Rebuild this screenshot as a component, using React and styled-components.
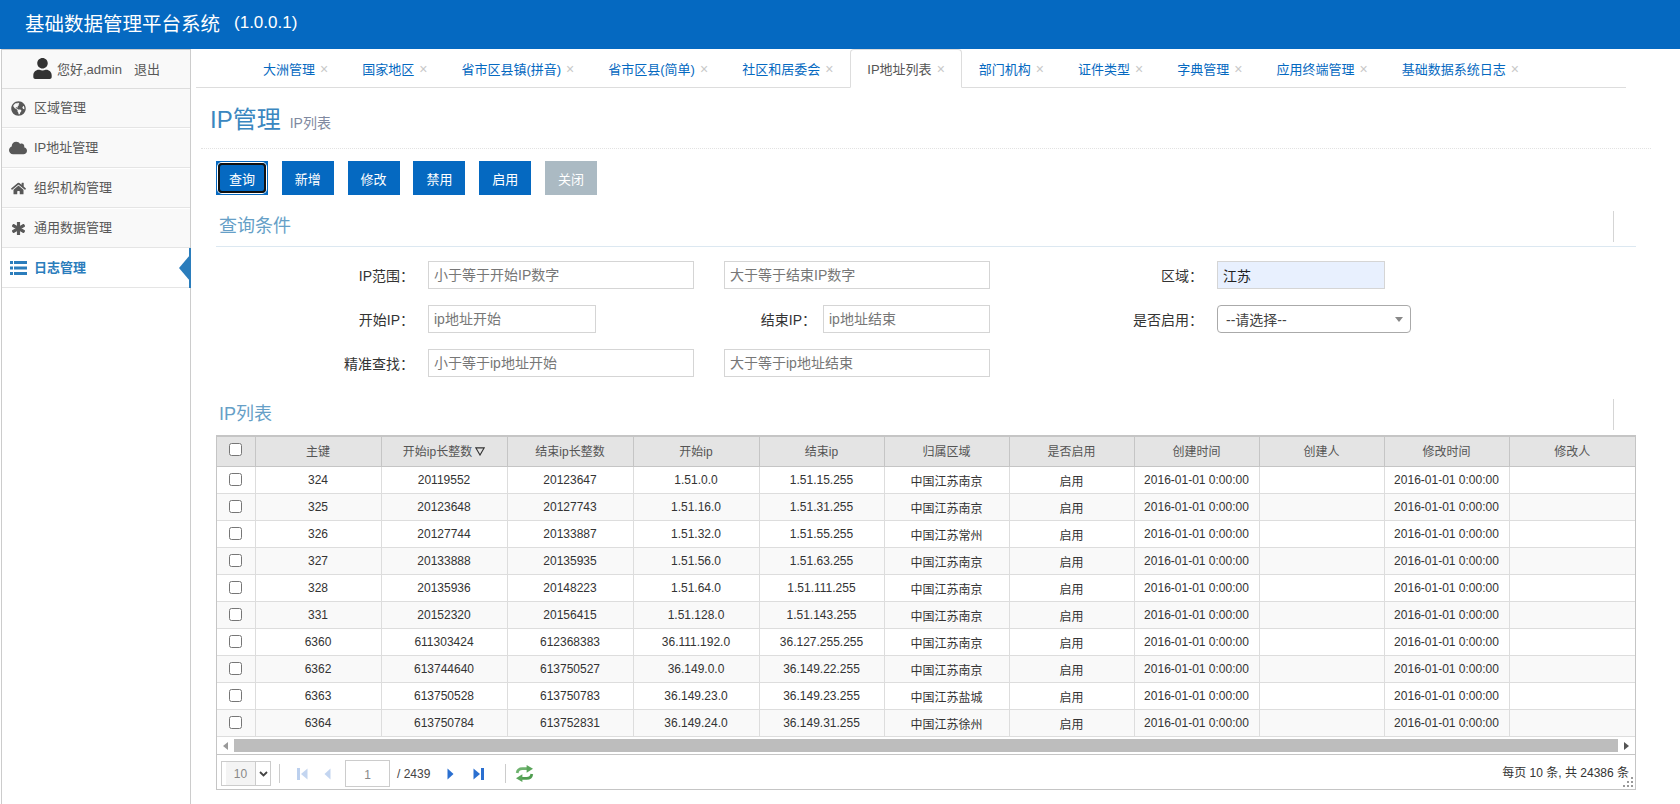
import React from "react";
import styled, { createGlobalStyle } from "styled-components";
import { FaAsterisk, FaCloud, FaGlobeAmericas, FaHome, FaUser } from "react-icons/fa";

const BLUE = "#0569c1";
const FONT = '"Liberation Sans", "Noto Sans CJK SC", sans-serif';

const GlobalStyle = createGlobalStyle`
  html, body {
    margin: 0;
    padding: 0;
    background: #fff;
    font-family: ${FONT};
    font-size: 13px;
    color: #393939;
  }
`;

const Page = styled.div`
  height: 804px;
  overflow: hidden;
  display: flex;
  flex-direction: column;
`;

const TopBar = styled.header`
  height: 49px;
  flex: none;
  background: ${BLUE};
  color: #fff;
  display: flex;
  align-items: center;
  padding: 0 0 4px 25px;
  box-sizing: border-box;
  font-size: 19.5px;
  gap: 14px;

  small {
    font-size: 17px;
  }
`;

const Body = styled.div`
  flex: 1;
  display: flex;
  min-height: 0;
`;

const Sidebar = styled.aside`
  width: 190px;
  margin-left: 1px;
  flex: none;
  box-sizing: border-box;
  border: 1px solid #ccc;
  border-width: 1px 1px 0;
`;

const UserRow = styled.div`
  height: 39px;
  background: #f9f9f9;
  border-bottom: 1px solid #ddd;
  display: flex;
  align-items: center;
  justify-content: center;
  gap: 4px;
  padding-bottom: 1px;
  box-sizing: border-box;
  color: #585858;
  font-size: 13px;

  svg {
    font-size: 21px;
    color: #333;
  }

  a {
    margin-left: 8px;
  }
`;

const NavRow = styled.div`
  height: 39px;
  position: relative;
  box-sizing: border-box;
  padding-bottom: 3px;
  background: ${(p) => (p.$active ? "#fff" : "#f9f9f9")};
  color: ${(p) => (p.$active ? "#2b7dbc" : "#585858")};
  font-weight: ${(p) => (p.$active ? 700 : 400)};
  border-bottom: 1px solid #e5e5e5;
  margin-bottom: 1px;
  display: flex;
  align-items: center;
  font-size: 13px;

  &::before {
    content: ${(p) => (p.$active ? '""' : "none")};
    position: absolute;
    right: -1px;
    top: -1px;
    bottom: -1px;
    width: 2px;
    background: #2b7dbc;
  }

  &::after {
    content: ${(p) => (p.$active ? '""' : "none")};
    position: absolute;
    right: 0;
    top: 50%;
    margin-top: -13px;
    border: 13px solid transparent;
    border-left: 0;
    border-right: 11px solid #2b7dbc;
  }
`;

const NavIcon = styled.span`
  width: 32px;
  flex: none;
  display: flex;
  justify-content: center;
  font-size: ${(p) => p.$size || 15}px;
  margin-top: 3px;

  svg {
    stroke: currentColor;
    stroke-width: ${(p) => p.$bold || 0};
  }
`;

const Main = styled.main`
  flex: 1;
  min-width: 0;
  padding-left: 5px;
`;

const Tabs = styled.ul`
  list-style: none;
  margin: 0;
  width: 1430px;
  height: 39px;
  box-sizing: border-box;
  padding: 0 0 0 50px;
  border-bottom: 1px solid #ddd;
  display: flex;
`;

const Tab = styled.li`
  height: 39px;
  box-sizing: border-box;
  padding: 0 16px;
  display: flex;
  align-items: center;
  gap: 5px;
  color: ${(p) => (p.$active ? "#555" : BLUE)};
  font-size: 13px;
  white-space: nowrap;
  background: ${(p) => (p.$active ? "#fff" : "transparent")};
  border: 1px solid ${(p) => (p.$active ? "#ddd" : "transparent")};
  border-bottom-color: ${(p) => (p.$active ? "#fff" : "transparent")};
  border-radius: 4px 4px 0 0;

  i {
    font-style: normal;
    color: #c8c8c8;
    font-size: 14px;
    line-height: 1;
  }
`;

const PageHeader = styled.div`
  margin-left: 5px;
  width: 1450px;
  height: 61px;
  box-sizing: border-box;
  border-bottom: 1px dotted #e2e2e2;
  display: flex;
  align-items: baseline;
  padding: 12px 0 0 9px;
  gap: 9px;

  h1 {
    margin: 0;
    font-size: 24px;
    font-weight: 400;
    color: #3a87c0;
  }

  small {
    font-size: 14px;
    color: #8089a0;
  }
`;

const Content = styled.div`
  width: 1420px;
  margin-left: 20px;
`;

const Toolbar = styled.div`
  display: flex;
  gap: 13.8px;
  margin-top: 12px;
`;

const ActionButton = styled.button`
  width: 52px;
  height: 34px;
  padding: 0;
  border: 0;
  border-radius: 0;
  position: relative;
  color: #fff;
  font-family: inherit;
  font-size: 13px;
  background: ${(p) => (p.$disabled ? "#abbac3" : BLUE)};

  &::after {
    content: ${(p) => (p.$focused ? '""' : "none")};
    position: absolute;
    inset: 2px;
    border: 2px solid #111;
    border-radius: 4px;
    box-shadow: 0 0 0 1px #fff;
  }
`;

const SectionHead = styled.div`
  margin-top: ${(p) => p.$top}px;
  height: ${(p) => p.$height}px;
  padding: 0 22px 0 3px;
  display: flex;
  align-items: center;
  justify-content: space-between;
  color: #669fc7;
  font-size: 18px;
  border-bottom: ${(p) => (p.$line ? "1px solid #dce8f1" : "0")};
  box-sizing: content-box;
`;

const SectionTitle = styled.span`
  margin-top: -${(p) => p.$up}px;
`;

const Tick = styled.span`
  width: 1px;
  height: 31px;
  background: #d5d5d5;
  align-self: flex-start;
`;

const FilterForm = styled.div`
  display: grid;
  grid-template-columns: 212px 562px 227px 1fr;
  row-gap: 16px;
  align-items: center;
  padding-top: 14px;
`;

const Label = styled.label`
  text-align: right;
  padding-right: 14px;
  color: #333;
  font-size: 14px;
`;

const FieldGroup = styled.div`
  display: flex;
  align-items: center;
  justify-content: space-between;
`;

const TextBox = styled.input`
  width: ${(p) => p.$w}px;
  height: 28px;
  box-sizing: border-box;
  border: 1px solid #d5d5d5;
  padding: 0 5px;
  font-family: inherit;
  font-size: 14px;
  color: #222;
  background: ${(p) => (p.$filled ? "#e8f0fe" : "#fff")};
  outline: 0;

  &::placeholder {
    color: #777;
    opacity: 1;
  }
`;

const InnerLabel = styled.span`
  margin-left: auto;
  margin-right: 7px;
  color: #333;
  font-size: 14px;
`;

const SelectBox = styled.div`
  width: 194px;
  height: 28px;
  box-sizing: border-box;
  border: 1px solid #aaa;
  border-radius: 4px;
  padding: 0 8px;
  display: flex;
  align-items: center;
  justify-content: space-between;
  color: #444;
  font-size: 14px;

  &::after {
    content: "";
    border: 4px solid transparent;
    border-top: 5px solid #888;
    border-bottom: 0;
    margin-right: -1px;
  }
`;

const GridBox = styled.div`
  position: relative;
  border: 1px solid #c5c5c5;
  border-top-width: 2px;
  margin-top: 5px;
  height: 355px;
  box-sizing: border-box;
`;

const Table = styled.table`
  width: 100%;
  table-layout: fixed;
  border-collapse: collapse;
  font-size: 12px;
  color: #333;
`;

const HeadCell = styled.th`
  height: 26px;
  padding: 0 0 3px;
  background: #e4e4e4;
  border: 1px solid #c5c5c5;
  border-top: 0;
  font-weight: 400;
  color: #555;
  text-align: center;

  &:first-child {
    border-left: 0;
  }

  &:last-child {
    border-right: 0;
  }
`;

const Row = styled.tr`
  background: ${(p) => (p.$alt ? "#f9f9f9" : "#fff")};
`;

const Cell = styled.td`
  height: 26px;
  padding: 0;
  text-align: center;
  border: 1px solid #ddd;

  &:first-child {
    border-left: 0;
  }

  &:last-child {
    border-right: 0;
  }
`;

const Check = styled.input`
  display: block;
  margin: 0 auto 1px;
  width: 13px;
  height: 13px;
`;

const SortMark = styled.svg`
  width: 10px;
  height: 9px;
  margin-left: 3px;
  vertical-align: 0;
`;

const ScrollTrack = styled.div`
  height: 18px;
  border-bottom: 1px solid #c5c5c5;
  display: flex;
  align-items: center;
  box-sizing: border-box;
`;

const ScrollArrow = styled.span`
  width: 17px;
  flex: none;
  display: flex;
  justify-content: center;

  &::after {
    content: "";
    border: 4px solid transparent;
    border-${(p) => (p.$dir === "left" ? "right" : "left")}: 5px solid ${(p) => (p.$dir === "left" ? "#999" : "#555")};
    border-${(p) => p.$dir}: 0;
  }
`;

const ScrollThumb = styled.div`
  flex: 1;
  height: 13px;
  background: #bdbdbd;
`;

const Pager = styled.div`
  height: 36px;
  display: flex;
  align-items: center;
  box-sizing: border-box;
  padding: 1px 4px 0;
  color: #444;
  font-size: 12px;
`;

const PageSize = styled.div`
  width: 50px;
  height: 25px;
  box-sizing: border-box;
  border: 1px solid #ccc;
  display: flex;
  align-items: stretch;

  span {
    width: 30px;
    margin: 0 0 0 4px;
    background: #f4f4f4;
    color: #888;
    font-size: 12px;
    display: flex;
    align-items: center;
    justify-content: center;
    border-right: 1px solid #ccc;
    box-sizing: border-box;
  }

  em {
    flex: 1;
    display: flex;
    align-items: center;
    justify-content: center;
  }
`;

const PagerDivider = styled.span`
  width: 1px;
  height: 19px;
  background: #ccc;
  margin: 0 ${(p) => p.$right}px 0 ${(p) => p.$left}px;
`;

const PagerBtn = styled.svg`
  width: ${(p) => p.$w}px;
  height: 14px;
  margin-right: ${(p) => p.$gap}px;
  flex: none;
`;

const PageInput = styled.div`
  width: 45px;
  height: 27px;
  box-sizing: border-box;
  border: 1px solid #ccc;
  margin-right: 7px;
  color: #888;
  display: flex;
  align-items: center;
  justify-content: center;
  padding-top: 2px;
  font-size: 12px;
`;

const PageTotal = styled.span`
  width: 50px;
  flex: none;
`;

const PagerInfo = styled.span`
  margin-left: auto;
  margin-right: 2px;
  padding-bottom: 4px;
  color: #333;
`;

const Grip = styled.svg`
  position: absolute;
  right: 2px;
  bottom: 2px;
  width: 10px;
  height: 10px;
`;

const tabs = [
  "大洲管理",
  "国家地区",
  "省市区县镇(拼音)",
  "省市区县(简单)",
  "社区和居委会",
  "IP地址列表",
  "部门机构",
  "证件类型",
  "字典管理",
  "应用终端管理",
  "基础数据系统日志",
];

const columns = ["主键", "开始ip长整数", "结束ip长整数", "开始ip", "结束ip", "归属区域", "是否启用", "创建时间", "创建人", "修改时间", "修改人"];
const colWidths = [38, 126, 126, 126, 126, 125, 125, 125, 125, 125, 125, 126];

const rows = [
  ["324", "20119552", "20123647", "1.51.0.0", "1.51.15.255", "南京"],
  ["325", "20123648", "20127743", "1.51.16.0", "1.51.31.255", "南京"],
  ["326", "20127744", "20133887", "1.51.32.0", "1.51.55.255", "常州"],
  ["327", "20133888", "20135935", "1.51.56.0", "1.51.63.255", "南京"],
  ["328", "20135936", "20148223", "1.51.64.0", "1.51.111.255", "南京"],
  ["331", "20152320", "20156415", "1.51.128.0", "1.51.143.255", "南京"],
  ["6360", "611303424", "612368383", "36.111.192.0", "36.127.255.255", "南京"],
  ["6362", "613744640", "613750527", "36.149.0.0", "36.149.22.255", "南京"],
  ["6363", "613750528", "613750783", "36.149.23.0", "36.149.23.255", "盐城"],
  ["6364", "613750784", "613752831", "36.149.24.0", "36.149.31.255", "徐州"],
];

const ListIcon = () => (
  <svg width="17" height="14" viewBox="0 0 17 14" fill="#2b7dbc" stroke="none">
    <path d="M0 0h3v3H0zM4 0h13v3H4zM0 5.5h3v3H0zM4 5.5h13v3H4zM0 11h3v3H0zM4 11h13v3H4z" />
  </svg>
);

const nav = [
  { label: "区域管理", icon: <FaGlobeAmericas />, size: 15 },
  { label: "IP地址管理", icon: <FaCloud />, size: 18 },
  { label: "组织机构管理", icon: <FaHome />, size: 15 },
  { label: "通用数据管理", icon: <FaAsterisk />, size: 13, bold: 40 },
  { label: "日志管理", icon: <ListIcon />, active: true },
];

const CREATED = "2016-01-01 0:00:00";

const App = () => {
  return (
    <Page>
      <GlobalStyle />
      <TopBar>
        <span>基础数据管理平台系统</span>
        <small>(1.0.0.1)</small>
      </TopBar>
      <Body>
        <Sidebar>
          <UserRow>
            <FaUser />
            <span>您好,admin</span>
            <a>退出</a>
          </UserRow>
          {nav.map((item) => (
            <NavRow key={item.label} $active={item.active}>
              <NavIcon $size={item.size} $bold={item.bold}>
                {item.icon}
              </NavIcon>
              {item.label}
            </NavRow>
          ))}
        </Sidebar>
        <Main>
          <Tabs>
            {tabs.map((t) => (
              <Tab key={t} $active={t === "IP地址列表"}>
                {t}
                <i>×</i>
              </Tab>
            ))}
          </Tabs>
          <PageHeader>
            <h1>IP管理</h1>
            <small>IP列表</small>
          </PageHeader>
          <Content>
            <Toolbar>
              <ActionButton $focused>查询</ActionButton>
              <ActionButton>新增</ActionButton>
              <ActionButton>修改</ActionButton>
              <ActionButton>禁用</ActionButton>
              <ActionButton>启用</ActionButton>
              <ActionButton $disabled>关闭</ActionButton>
            </Toolbar>

            <SectionHead $top={16} $height={35} $line>
              <SectionTitle $up={10}>查询条件</SectionTitle>
              <Tick />
            </SectionHead>
            <FilterForm>
              <Label>IP范围：</Label>
              <FieldGroup>
                <TextBox $w={266} placeholder="小于等于开始IP数字" />
                <TextBox $w={266} placeholder="大于等于结束IP数字" />
              </FieldGroup>
              <Label>区域：</Label>
              <TextBox $w={168} $filled defaultValue="江苏" />

              <Label>开始IP：</Label>
              <FieldGroup>
                <TextBox $w={168} placeholder="ip地址开始" />
                <InnerLabel>结束IP：</InnerLabel>
                <TextBox $w={167} placeholder="ip地址结束" />
              </FieldGroup>
              <Label>是否启用：</Label>
              <SelectBox>--请选择--</SelectBox>

              <Label>精准查找：</Label>
              <FieldGroup>
                <TextBox $w={266} placeholder="小于等于ip地址开始" />
                <TextBox $w={266} placeholder="大于等于ip地址结束" />
              </FieldGroup>
            </FilterForm>

            <SectionHead $top={22} $height={31}>
              <SectionTitle $up={6}>IP列表</SectionTitle>
              <Tick />
            </SectionHead>

            <GridBox>
              <Table>
                <colgroup>
                  {colWidths.map((w, i) => (
                    <col key={i} width={w} />
                  ))}
                </colgroup>
                <thead>
                  <tr>
                    <HeadCell>
                      <Check type="checkbox" />
                    </HeadCell>
                    {columns.map((c) => (
                      <HeadCell key={c}>
                        {c}
                        {c === "开始ip长整数" && (
                          <SortMark viewBox="0 0 9 8">
                            <path d="M0.7 0.7H8.3L4.5 7.2Z" fill="none" stroke="#333" />
                          </SortMark>
                        )}
                      </HeadCell>
                    ))}
                  </tr>
                </thead>
                <tbody>
                  {rows.map((r, i) => (
                    <Row key={r[0]} $alt={i % 2 === 1}>
                      <Cell>
                        <Check type="checkbox" />
                      </Cell>
                      <Cell>{r[0]}</Cell>
                      <Cell>{r[1]}</Cell>
                      <Cell>{r[2]}</Cell>
                      <Cell>{r[3]}</Cell>
                      <Cell>{r[4]}</Cell>
                      <Cell>中国江苏{r[5]}</Cell>
                      <Cell>启用</Cell>
                      <Cell>{CREATED}</Cell>
                      <Cell />
                      <Cell>{CREATED}</Cell>
                      <Cell />
                    </Row>
                  ))}
                </tbody>
              </Table>
              <ScrollTrack>
                <ScrollArrow $dir="left" />
                <ScrollThumb />
                <ScrollArrow $dir="right" />
              </ScrollTrack>
              <Pager>
                <PageSize>
                  <span>10</span>
                  <em>
                    <svg width="9" height="6" viewBox="0 0 9 6">
                      <path d="M1 1l3.5 3.5L8 1" fill="none" stroke="#444" strokeWidth="1.8" />
                    </svg>
                  </em>
                </PageSize>
                <PagerDivider $left={8} $right={17} />
                <PagerBtn $w={11} $gap={16} viewBox="0 0 11 14">
                  <rect x="0" y="1" width="3" height="12" fill="#bcd0ee" />
                  <path d="M10.5 1.5V12.5L4 7Z" fill="#c3d5f0" />
                </PagerBtn>
                <PagerBtn $w={7} $gap={14} viewBox="0 0 7 14">
                  <path d="M6.5 1.5V12.5L0.5 7Z" fill="#c3d5f0" />
                </PagerBtn>
                <PageInput>1</PageInput>
                <PageTotal>/ 2439</PageTotal>
                <PagerBtn $w={7} $gap={19} viewBox="0 0 7 14">
                  <path d="M0.5 1.5V12.5L6.5 7Z" fill="#2a6fd0" />
                </PagerBtn>
                <PagerBtn $w={11} $gap={0} viewBox="0 0 11 14">
                  <path d="M0.5 1.5V12.5L7 7Z" fill="#2a6fd0" />
                  <rect x="8" y="1" width="3" height="12" fill="#2a6fd0" />
                </PagerBtn>
                <PagerDivider $left={21} $right={9} />
                <svg width="19" height="17" viewBox="0 0 17 16">
                  <path d="M1.6 7.5C2 4.8 4 3.4 6.5 3.4H11" fill="none" stroke="#6fb36f" strokeWidth="2.6" />
                  <path d="M10.5 0L16.5 3.6L10.5 7.4Z" fill="#5aa55a" />
                  <path d="M15.4 8.5C15 11.2 13 12.6 10.5 12.6H6" fill="none" stroke="#4f9c4f" strokeWidth="2.6" />
                  <path d="M6.5 16L0.5 12.4L6.5 8.6Z" fill="#5aa55a" />
                </svg>
                <PagerInfo>每页 10 条, 共 24386 条</PagerInfo>
              </Pager>
              <Grip viewBox="0 0 10 10">
                <path d="M8 0h2v2H8zM4 4h2v2H4zM8 4h2v2H8zM0 8h2v2H0zM4 8h2v2H4zM8 8h2v2H8z" fill="#999" />
              </Grip>
            </GridBox>
          </Content>
        </Main>
      </Body>
    </Page>
  );
};

export default App;
